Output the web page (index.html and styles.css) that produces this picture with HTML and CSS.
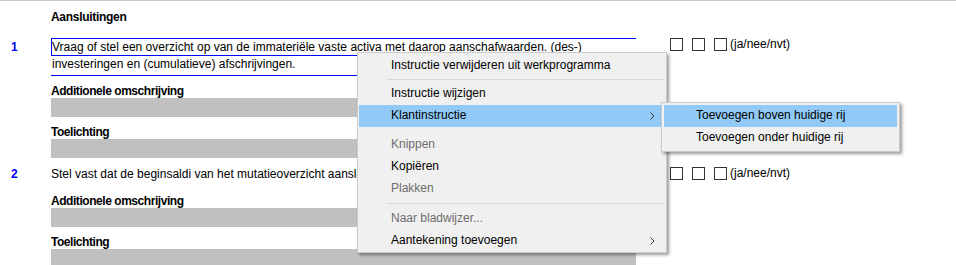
FILE: index.html
```html
<!DOCTYPE html>
<html lang="nl">
<head>
<meta charset="utf-8">
<title>Werkprogramma</title>
<link rel="stylesheet" href="styles.css">
</head>
<body>
<div class="doc">
  <div class="heading">Aansluitingen</div>

  <div class="item item-1">
    <div class="num">1</div>
    <div class="main">
      <div class="desc focused">
        <div class="desc-line first">Vraag of stel een overzicht op van de immateriële vaste activa met daarop aanschafwaarden. (des-)</div>
        <div class="desc-line last">investeringen en (cumulatieve) afschrijvingen.</div>
      </div>
      <div class="field">
        <div class="label">Additionele omschrijving</div>
        <div class="input"></div>
      </div>
      <div class="field">
        <div class="label">Toelichting</div>
        <div class="input"></div>
      </div>
    </div>
    <div class="answer">
      <span class="cb"></span><span class="cb"></span><span class="cb"></span><span class="opts">(ja/nee/nvt)</span>
    </div>
  </div>

  <div class="item item-2">
    <div class="num">2</div>
    <div class="main">
      <div class="desc plain">
        <div class="desc-line">Stel vast dat de beginsaldi van het mutatieoverzicht aansluiten op de eindsaldi van het voorgaande boekjaar.</div>
      </div>
      <div class="field">
        <div class="label">Additionele omschrijving</div>
        <div class="input"></div>
      </div>
      <div class="field">
        <div class="label">Toelichting</div>
        <div class="input"></div>
      </div>
    </div>
    <div class="answer">
      <span class="cb"></span><span class="cb"></span><span class="cb"></span><span class="opts">(ja/nee/nvt)</span>
    </div>
  </div>
</div>

<div class="menu main-menu">
  <div class="mi">Instructie verwijderen uit werkprogramma</div>
  <div class="sep"></div>
  <div class="mi">Instructie wijzigen</div>
  <div class="mi hl">Klantinstructie<svg class="arrow" width="5" height="8" viewBox="0 0 5 8"><polyline points="0.5,0.5 4,4 0.5,7.5" fill="none" stroke="#333" stroke-width="1"/></svg></div>
  <div class="gap"></div>
  <div class="mi dis">Knippen</div>
  <div class="mi">Kopiëren</div>
  <div class="mi dis">Plakken</div>
  <div class="sep sep-lower"></div>
  <div class="mi dis">Naar bladwijzer...</div>
  <div class="mi">Aantekening toevoegen<svg class="arrow" width="5" height="8" viewBox="0 0 5 8"><polyline points="0.5,0.5 4,4 0.5,7.5" fill="none" stroke="#333" stroke-width="1"/></svg></div>
</div>

<div class="menu sub-menu">
  <div class="mi hl">Toevoegen boven huidige rij</div>
  <div class="mi">Toevoegen onder huidige rij</div>
</div>
</body>
</html>
```
FILE: styles.css
```css
* { box-sizing: border-box; }
html, body { margin: 0; padding: 0; }
body {
  position: relative;
  width: 956px;
  height: 265px;
  overflow: hidden;
  background: #ffffff;
  border-top: 1px solid #c8c8c8;
  font-family: "Liberation Sans", Arial, sans-serif;
  font-size: 12px;
  color: #000000;
}
.doc { padding-top: 8px; }
.heading {
  margin-left: 51px;
  font-weight: bold;
  line-height: 16px;
  letter-spacing: -0.3px;
}
.item { display: flex; align-items: flex-start; }
.item-1 { margin-top: 13px; }
.item-2 { margin-top: 7px; }
.num {
  width: 51px;
  padding-left: 11px;
  padding-top: 1px;
  line-height: 16px;
  color: #0000ff;
  font-weight: bold;
}
.main { width: 585px; }
.desc-line {
  line-height: 16px;
  white-space: nowrap;
  overflow: hidden;
}
.focused .first { border: 1px solid #0000ff; border-right: 0; }
.focused .last { padding: 0 0 3px 1px; border-bottom: 1px solid #0000ff; }
.plain {
  border-top: 1px solid transparent;
  border-bottom: 1px solid transparent;
  padding-bottom: 3px;
}
.field { margin-top: 9px; }
.label {
  font-weight: bold;
  line-height: 13px;
  letter-spacing: -0.45px;
  white-space: nowrap;
}
.input { height: 19px; background: #c0c0c0; }
.answer {
  display: flex;
  align-items: center;
  margin-left: 34px;
  line-height: 13px;
}
.item-2 .answer { margin-top: 2px; }
.cb {
  width: 13px;
  height: 13px;
  border: 1px solid #333333;
  background: #ffffff;
}
.cb + .cb { margin-left: 9px; }
.opts { margin-left: 3px; }

.menu {
  position: absolute;
  background: #f0f0f0;
  border: 1px solid #cccccc;
  box-shadow: 2px 2px 3px rgba(0, 0, 0, 0.4);
}
.main-menu { left: 357px; top: 51px; width: 310px; padding: 2px 1px 0; }
.sub-menu { left: 661px; top: 101px; width: 239px; padding: 2px; }
.mi {
  position: relative;
  height: 22px;
  line-height: 20px;
  padding-left: 32px;
  white-space: nowrap;
}
.mi.hl { background: #91c9f7; }
.mi.dis { color: #6d6d6d; }
.sep { height: 1px; background: #d7d7d7; margin: 2px 1px 3px 28px; }
.sep-lower { margin-top: 3px; margin-bottom: 4px; }
.gap { height: 7px; }
.arrow { position: absolute; right: 10px; top: 7px; }
```
